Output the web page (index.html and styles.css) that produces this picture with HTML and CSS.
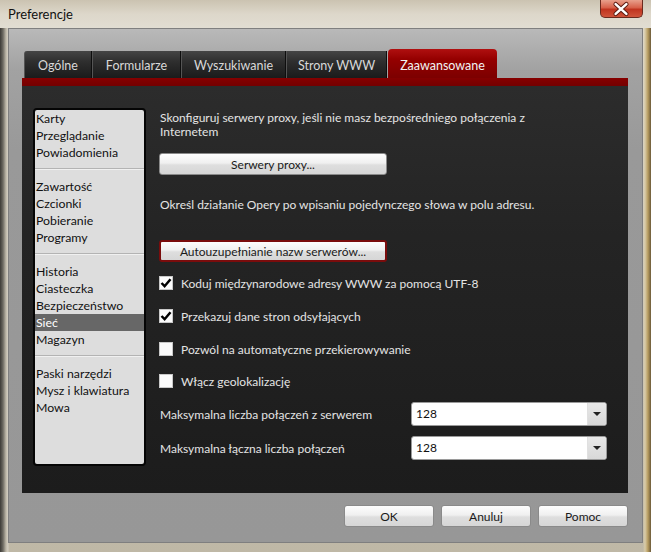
FILE: index.html
```html
<!DOCTYPE html>
<html lang="pl">
<head>
<meta charset="utf-8">
<title>Preferencje</title>
<link rel="stylesheet" href="styles.css">
</head>
<body>
<div class="window">
  <div class="titlebar">
    <span class="title">Preferencje</span>
    <div class="close">
      <svg width="43" height="18" viewBox="0 0 43 18">
        <path d="M16 4 L27 14 M27 4 L16 14" stroke="#5a1a10" stroke-width="4.5" stroke-linecap="round"/>
        <path d="M16 4 L27 14 M27 4 L16 14" stroke="#ffffff" stroke-width="2.6" stroke-linecap="round"/>
      </svg>
    </div>
  </div>
  <div class="client">
    <div class="tabs">
      <div class="tab t1">Ogólne</div>
      <div class="tab t2">Formularze</div>
      <div class="tab t3">Wyszukiwanie</div>
      <div class="tab t4">Strony WWW</div>
      <div class="tab active t5">Zaawansowane</div>
    </div>
    <div class="redbar"></div>
    <div class="panel">
      <div class="sidelist">
        <div class="item">Karty</div>
        <div class="item">Przeglądanie</div>
        <div class="item">Powiadomienia</div>
        <div class="sep"></div>
        <div class="item">Zawartość</div>
        <div class="item">Czcionki</div>
        <div class="item">Pobieranie</div>
        <div class="item">Programy</div>
        <div class="sep"></div>
        <div class="item">Historia</div>
        <div class="item">Ciasteczka</div>
        <div class="item">Bezpieczeństwo</div>
        <div class="item selected">Sieć</div>
        <div class="item">Magazyn</div>
        <div class="sep"></div>
        <div class="item">Paski narzędzi</div>
        <div class="item">Mysz i klawiatura</div>
        <div class="item">Mowa</div>
      </div>
      <div class="content">
        <p class="para p1">Skonfiguruj serwery proxy, jeśli nie masz bezpośredniego połączenia z Internetem</p>
        <button class="btn wide b1">Serwery proxy...</button>
        <p class="para p2">Określ działanie Opery po wpisaniu pojedynczego słowa w polu adresu.</p>
        <button class="btn wide focused b2">Autouzupełnianie nazw serwerów...</button>
        <div class="check c1"><span class="box"><svg width="14" height="14" viewBox="0 0 14 14"><path d="M2.5 7 L5.6 10.2 L11.5 3.2" fill="none" stroke="#000" stroke-width="2.5"/></svg></span><span>Koduj międzynarodowe adresy WWW za pomocą UTF-8</span></div>
        <div class="check c2"><span class="box"><svg width="14" height="14" viewBox="0 0 14 14"><path d="M2.5 7 L5.6 10.2 L11.5 3.2" fill="none" stroke="#000" stroke-width="2.5"/></svg></span><span>Przekazuj dane stron odsyłających</span></div>
        <div class="check c3"><span class="box"></span><span>Pozwól na automatyczne przekierowywanie</span></div>
        <div class="check c4"><span class="box"></span><span>Włącz geolokalizację</span></div>
        <div class="field f1"><span class="flabel">Maksymalna liczba połączeń z serwerem</span><div class="select"><span class="val">128</span><span class="arrow"></span></div></div>
        <div class="field f2"><span class="flabel">Maksymalna łączna liczba połączeń</span><div class="select"><span class="val">128</span><span class="arrow"></span></div></div>
      </div>
    </div>
    <div class="footer">
      <button class="btn fbtn">OK</button>
      <button class="btn fbtn">Anuluj</button>
      <button class="btn fbtn">Pomoc</button>
    </div>
  </div>
</div>
</body>
</html>
```
FILE: styles.css
```css
* { box-sizing: border-box; }
html, body { margin: 0; padding: 0; }
body {
  width: 651px;
  height: 552px;
  overflow: hidden;
  font-family: "Lato", "Open Sans", sans-serif;
}
.window {
  width: 651px;
  height: 552px;
  display: flex;
  flex-direction: column;
  padding-bottom: 9px;
  background:
    linear-gradient(90deg, #3c3a36 0, #6d6a62 3px, #bdb7a8 6px, #d4cfc3 8px, transparent 9px),
    linear-gradient(270deg, #6b5a3a 0, #b59a5e 3px, #d9cba7 6px, transparent 8px),
    linear-gradient(180deg, #c8c1b1 0, #d9d4c8 12px, #dcd8cd 28px, #bfb8a6 100%);
}
.titlebar {
  height: 28px;
  display: flex;
  justify-content: space-between;
  align-items: flex-start;
  padding: 0 8px 0 8px;
  background: linear-gradient(180deg, #cbc3b1 0, #ddd7ca 14px, #e1ddd2 28px);
}
.title {
  margin-top: 6px;
  font-size: 13px;
  color: #111;
}
.close {
  width: 43px;
  height: 18px;
  border-radius: 0 0 5px 5px;
  border: 1px solid #6b2a1e;
  border-top: none;
  background: linear-gradient(180deg, #e8a08c 0, #d7614a 45%, #c0341f 55%, #d0543b 100%);
  display: flex;
  align-items: center;
  justify-content: center;
}
.close svg { display: block; margin-left: -1px; }
.client {
  flex: 1;
  margin: 0 8px;
  border: 1px solid #7f7f7f;
  background: linear-gradient(180deg, #b9b9b9 0, #a2a2a2 40px, #999999 120px, #979797 100%);
  display: flex;
  flex-direction: column;
  padding: 20px 14px 0 13px;
}
.tabs {
  height: 29px;
  display: flex;
  align-items: flex-end;
  padding-left: 2px;
}
.tab {
  height: 27px;
  display: flex;
  align-items: center;
  justify-content: center;
  font-size: 12.5px;
  color: #d8d8d8;
  background: linear-gradient(180deg, #454545 0, #2e2e2e 40%, #1b1b1b 100%);
  border-right: 1px solid #0e0e0e;
  border-left: 1px solid #555;
  padding-top: 2px;
}
.tab.t1 { width: 68px; border-radius: 3px 0 0 0; }
.tab.t2 { width: 89px; }
.tab.t3 { width: 105px; }
.tab.t4 { width: 101px; }
.tab.active {
  width: 109px;
  height: 29px;
  margin-left: 1px;
  color: #f2f2f2;
  border: none;
  border-radius: 4px 4px 0 0;
  padding-top: 4px;
  background: linear-gradient(180deg, #b01010 0, #950000 35%, #7c0000 100%);
}
.redbar {
  height: 8px;
  background: linear-gradient(180deg, #860000, #740000);
}
.panel {
  height: 407px;
  display: flex;
  align-items: flex-start;
  padding: 22px 0 0 11px;
  background: linear-gradient(180deg, #2c2c2c 0, #242424 150px, #1c1c1c 100%);
}
.sidelist {
  width: 113px;
  height: 358px;
  border: 2px solid #050505;
  border-radius: 4px;
  background: #dddddd;
  font-size: 12.3px;
  color: #111;
  flex-shrink: 0;
}
.item {
  height: 17px;
  line-height: 17px;
  padding-left: 1px;
  white-space: nowrap;
}
.item.selected {
  background: #676767;
  color: #fff;
}
.sep {
  height: 1px;
  margin: 7px 0 9px;
  background: #b3b3b3;
  box-shadow: 0 1px 0 #f0f0f0;
}
.content {
  margin-left: 13px;
  margin-top: 3px;
  color: #e4e4e4;
  font-size: 12px;
  display: flex;
  flex-direction: column;
  align-items: flex-start;
}
.para {
  margin: 0;
  line-height: 14px;
  padding-left: 1px;
}
.p1 { width: 380px; }
.p2 { margin-top: 23px; }
.btn {
  font-family: inherit;
  font-size: 12px;
  color: #1a1a1a;
  height: 22px;
  padding: 0;
  border: 1px solid #8a8a8a;
  border-radius: 3px;
  background: linear-gradient(180deg, #fdfdfd 0, #f0f0f0 45%, #dedede 55%, #d6d6d6 100%);
}
.btn.wide { width: 228px; }
.b1 { margin-top: 14px; }
.b2 { margin-top: 28px; }
.btn.focused {
  border: 2px solid #7a0c0c;
}
.check {
  display: flex;
  align-items: center;
  height: 14px;
  gap: 8px;
  white-space: nowrap;
}
.c1 { margin-top: 14px; }
.c2 { margin-top: 19px; }
.c3 { margin-top: 19px; }
.c4 { margin-top: 18px; }
.box {
  width: 14px;
  height: 14px;
  background: #fbfbfb;
  border: 1px solid #c8c8c8;
  display: flex;
  align-items: center;
  justify-content: center;
  flex-shrink: 0;
}
.box svg { display: block; margin: -1px; }
.field {
  display: flex;
  align-items: center;
  width: 448px;
  justify-content: space-between;
  padding-left: 1px;
}
.f1 { margin-top: 14px; }
.f2 { margin-top: 10px; }
.select {
  width: 196px;
  height: 24px;
  border: 1px solid #9a9a9a;
  border-radius: 3px;
  background: #fff;
  display: flex;
  overflow: hidden;
}
.val {
  flex: 1;
  color: #111;
  font-size: 12px;
  line-height: 22px;
  padding-left: 4px;
}
.arrow {
  width: 19px;
  background: linear-gradient(180deg, #e8e8e8, #d8d8d8);
  border-left: 1px solid #e0e0e0;
  display: flex;
  align-items: center;
  justify-content: center;
}
.arrow::after {
  content: "";
  width: 0;
  height: 0;
  border-left: 4px solid transparent;
  border-right: 4px solid transparent;
  border-top: 4px solid #222;
}
.footer {
  display: flex;
  justify-content: flex-end;
  gap: 7px;
  margin-top: 12px;
}
.fbtn { width: 90px; }
```
